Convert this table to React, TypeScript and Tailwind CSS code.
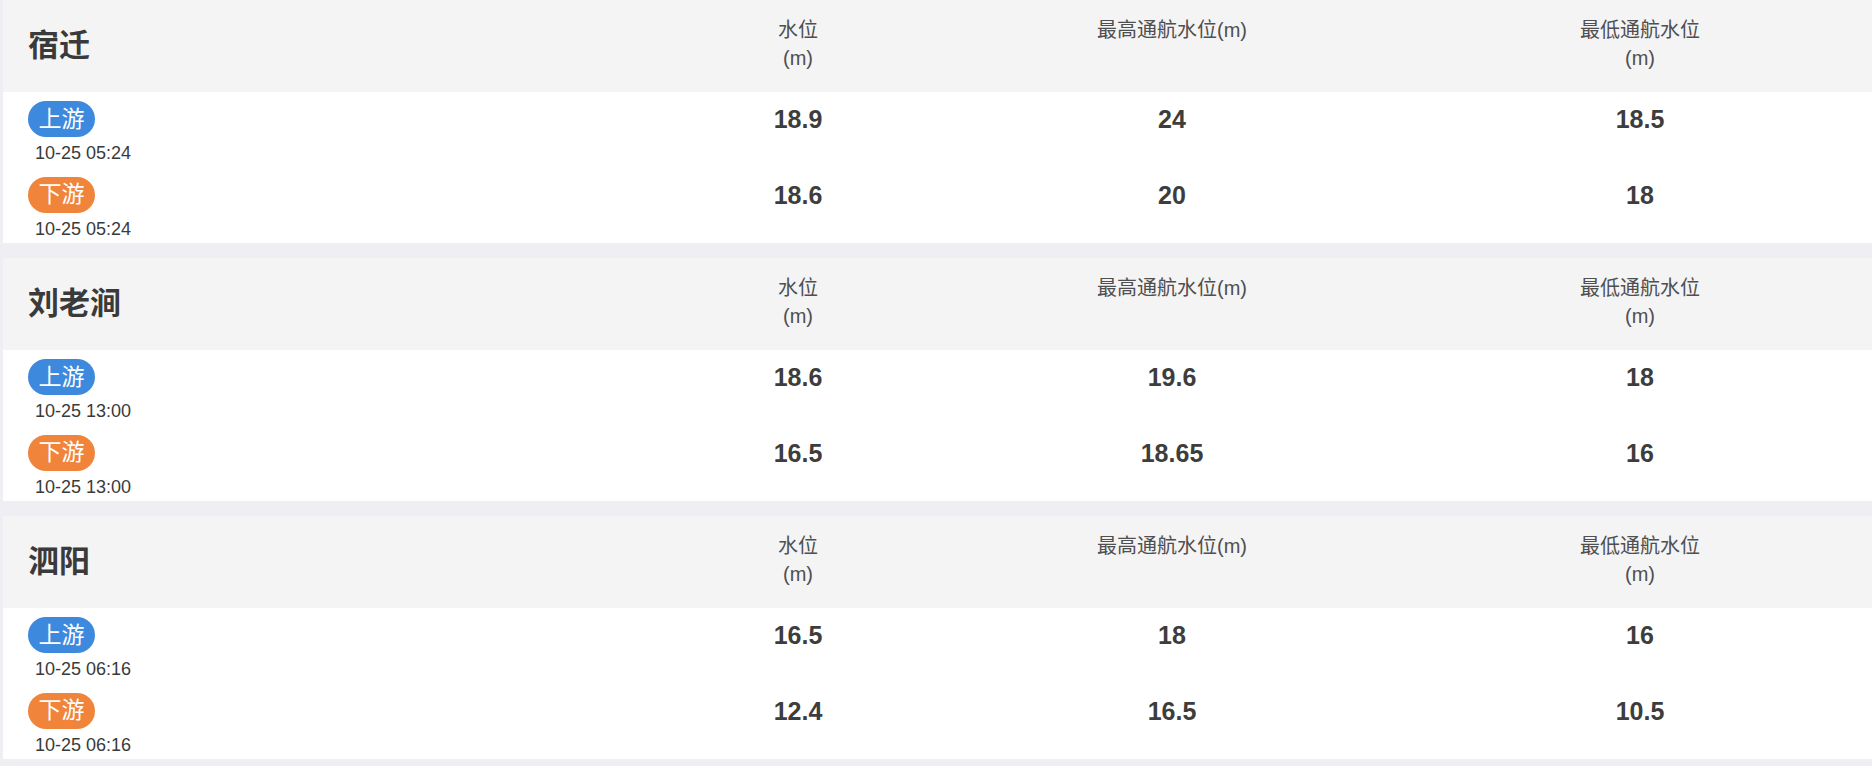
import React from 'react';

interface Reading {
  kind: 'up' | 'down';
  time: string;
  level: string;
  max: string;
  min: string;
}

interface Station {
  name: string;
  rows: Reading[];
}

const stations: Station[] = [
  {
    name: '宿迁',
    rows: [
      { kind: 'up', time: '10-25 05:24', level: '18.9', max: '24', min: '18.5' },
      { kind: 'down', time: '10-25 05:24', level: '18.6', max: '20', min: '18' },
    ],
  },
  {
    name: '刘老涧',
    rows: [
      { kind: 'up', time: '10-25 13:00', level: '18.6', max: '19.6', min: '18' },
      { kind: 'down', time: '10-25 13:00', level: '16.5', max: '18.65', min: '16' },
    ],
  },
  {
    name: '泗阳',
    rows: [
      { kind: 'up', time: '10-25 06:16', level: '16.5', max: '18', min: '16' },
      { kind: 'down', time: '10-25 06:16', level: '12.4', max: '16.5', min: '10.5' },
    ],
  },
];

const font = 'font-["Liberation_Sans","Noto_Sans_CJK_SC",sans-serif]';

function Badge({ kind }: { kind: 'up' | 'down' }) {
  const up = kind === 'up';
  return (
    <span
      className={
        up
          ? 'inline-flex items-center justify-center h-[36px] w-[67px] rounded-full bg-[#3d89de] text-white text-[23px] leading-none'
          : 'inline-flex items-center justify-center h-[36px] w-[67px] rounded-full bg-[#f0843b] text-white text-[23px] leading-none'
      }
    >
      {up ? '上游' : '下游'}
    </span>
  );
}

function StationCard({ station }: { station: Station }) {
  return (
    <section className="flex flex-col">
      {/* Header */}
      <div className="flex h-[92px] bg-[#f4f4f5]">
        <div className="w-[657px] flex items-center pl-[25px]">
          <h2 className="text-[31px] font-bold text-[#3a3a3a]">{station.name}</h2>
        </div>
        <div className="w-[276px] pt-[16px] text-center text-[20px] leading-[28px] text-[#4f4f4f]">
          水位
          <br />
          (m)
        </div>
        <div className="w-[472px] pt-[16px] text-center text-[20px] leading-[28px] text-[#4f4f4f]">
          最高通航水位(m)
        </div>
        <div className="w-[464px] pt-[16px] text-center text-[20px] leading-[28px] text-[#4f4f4f]">
          最低通航水位
          <br />
          (m)
        </div>
      </div>

      {/* Rows */}
      <div className="flex flex-col h-[151px] bg-white">
        {station.rows.map((r) => (
          <div key={r.kind} className="flex h-[76px] pt-[9px]">
            <div className="w-[657px] flex flex-col items-start pl-[25px]">
              <Badge kind={r.kind} />
              <span className="mt-[5px] ml-[7px] text-[18px] leading-[22px] text-[#3a3a3a]">{r.time}</span>
            </div>
            <div className="w-[276px] h-[38px] flex items-center justify-center text-[25px] font-bold text-[#3d3d3d]">
              {r.level}
            </div>
            <div className="w-[472px] h-[38px] flex items-center justify-center text-[25px] font-bold text-[#3d3d3d]">
              {r.max}
            </div>
            <div className="w-[464px] h-[38px] flex items-center justify-center text-[25px] font-bold text-[#3d3d3d]">
              {r.min}
            </div>
          </div>
        ))}
      </div>
    </section>
  );
}

export default function App() {
  return (
    <div className={`min-h-[766px] w-full bg-[#eeeef3] pl-[3px] ${font}`}>
      <div className="flex flex-col gap-[15px]">
        {stations.map((s) => (
          <StationCard key={s.name} station={s} />
        ))}
      </div>
    </div>
  );
}
